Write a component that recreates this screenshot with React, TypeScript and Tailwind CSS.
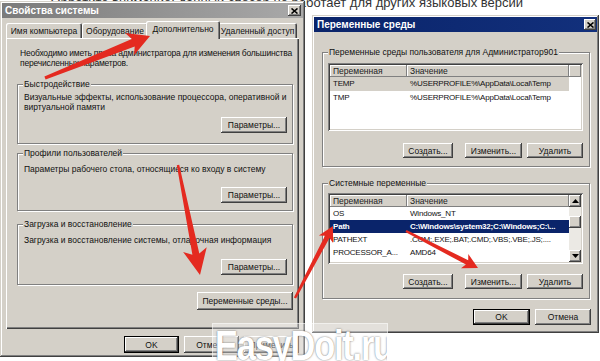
import React from "react";

const RAISED =
  "shadow-[inset_-1px_-1px_0_#404040,inset_1px_1px_0_#d4d0c8,inset_-2px_-2px_0_#808080,inset_2px_2px_0_#ffffff]";
const BTN =
  "shadow-[inset_-1px_-1px_0_#404040,inset_1px_1px_0_#ffffff,inset_-2px_-2px_0_#808080,inset_2px_2px_0_#d4d0c8]";
const SUNKEN =
  "shadow-[inset_1px_1px_0_#808080,inset_-1px_-1px_0_#ffffff,inset_2px_2px_0_#404040,inset_-2px_-2px_0_#d4d0c8]";

function Btn({
  w,
  h = "h-[16px]",
  def = false,
  children,
}: {
  w: string;
  h?: string;
  def?: boolean;
  children: React.ReactNode;
}) {
  if (def) {
    return (
      <div className={`${w} ${h} flex shrink-0 border border-black`}>
        <div className={`flex flex-1 items-center justify-center whitespace-nowrap bg-[#d4d0c8] ${BTN}`}>{children}</div>
      </div>
    );
  }
  return (
    <div className={`${w} ${h} flex shrink-0 items-center justify-center whitespace-nowrap bg-[#d4d0c8] ${BTN}`}>
      {children}
    </div>
  );
}

function CloseBtn({ w }: { w: string }) {
  return (
    <div className={`${w} flex h-[11px] items-center justify-center bg-[#d4d0c8] ${BTN}`}>
      <svg width="7" height="6" viewBox="0 0 7 6">
        <path d="M0.5 0.5 L6.5 5.5 M6.5 0.5 L0.5 5.5" stroke="#000" strokeWidth="1.6" />
      </svg>
    </div>
  );
}

function Group({
  label,
  className,
  children,
}: {
  label: string;
  className: string;
  children: React.ReactNode;
}) {
  return (
    <div
      className={`flex flex-col border border-[#808080] shadow-[inset_1px_1px_0_#ffffff,1px_1px_0_#ffffff] ${className}`}
    >
      <div className="-mt-[6px] ml-[5px] w-fit whitespace-nowrap bg-[#d4d0c8] px-[1px] leading-[10px]">{label}</div>
      {children}
    </div>
  );
}

function Tab({ w, children }: { w: string; children: React.ReactNode }) {
  return (
    <div
      className={`${w} flex h-[15px] shrink-0 items-center justify-center whitespace-nowrap rounded-t-[2px] bg-[#d4d0c8] shadow-[inset_1px_1px_0_#ffffff,inset_-1px_0_0_#404040,inset_-2px_0_0_#808080]`}
    >
      {children}
    </div>
  );
}

function HeaderCell({ className, children }: { className: string; children?: React.ReactNode }) {
  return (
    <div
      className={`flex h-full items-center bg-[#d4d0c8] pl-[3px] text-[#222] shadow-[inset_-1px_-1px_0_#808080,inset_1px_1px_0_#ffffff] ${className}`}
    >
      {children}
    </div>
  );
}

function LeftWindow() {
  return (
    <div className={`mt-[1px] flex h-[356px] w-[305px] shrink-0 flex-col bg-[#d4d0c8] p-[2px] ${RAISED}`}>
      <div className="flex h-[15px] items-center justify-between bg-gradient-to-r from-[#7b7b7b] to-[#a9a9a9] pl-[3px] pr-[2px]">
        <span className="text-[10px] font-bold leading-none text-white">Свойства системы</span>
        <CloseBtn w="w-[13px]" />
      </div>
      <div className="flex flex-col px-[4px] pt-[3px]">
        <div className="flex h-[17px] items-end">
          <Tab w="w-[76px]">Имя компьютера</Tab>
          <Tab w="w-[66px]">Оборудование</Tab>
          <div className="relative z-10 -mx-[2px] -mb-[1px] flex h-[18px] w-[74px] shrink-0 items-start justify-center rounded-t-[2px] bg-[#d4d0c8] pt-[3px] shadow-[inset_1px_1px_0_#ffffff,inset_-1px_0_0_#404040,inset_-2px_0_0_#808080]">
            Дополнительно
          </div>
          <Tab w="w-[79px]">Удаленный доступ</Tab>
        </div>
        <div className="flex h-[291px] flex-col pl-[11px] pr-[6px] pt-[10px] shadow-[inset_1px_1px_0_#ffffff,inset_-1px_-1px_0_#404040,inset_-2px_-2px_0_#808080]">
          <div className="ml-[3px] whitespace-nowrap tracking-[-0.2px]">
            Необходимо иметь права администратора для изменения большинства
            <br />
            перечисленных параметров.
          </div>
          <Group label="Быстродействие" className="mt-[16px] pb-[10px]">
            <div className="mt-[3px] whitespace-nowrap pl-[6px]">
              Визуальные эффекты, использование процессора, оперативной и
              <br />
              виртуальной памяти
            </div>
            <div className="mr-[5px] mt-[5px] self-end">
              <Btn w="w-[66px]">Параметры...</Btn>
            </div>
          </Group>
          <Group label="Профили пользователей" className="mt-[9px] pb-[7px]">
            <div className="mt-[6px] whitespace-nowrap pl-[6px]">
              Параметры рабочего стола, относящиеся ко входу в систему
            </div>
            <div className="mr-[5px] mt-[13px] self-end">
              <Btn w="w-[66px]">Параметры...</Btn>
            </div>
          </Group>
          <Group label="Загрузка и восстановление" className="mt-[13px] pb-[9px]">
            <div className="mt-[6px] whitespace-nowrap pl-[6px]">
              Загрузка и восстановление системы, отладочная информация
            </div>
            <div className="mr-[5px] mt-[14px] self-end">
              <Btn w="w-[66px]">Параметры...</Btn>
            </div>
          </Group>
          <div className="mt-[7px] self-end">
            <Btn w="w-[96px]" h="h-[18px]">
              Переменные среды...
            </Btn>
          </div>
        </div>
        <div className="mt-[7px] flex justify-end gap-[5px]">
          <Btn w="w-[55px]" h="h-[17px]" def>
            OK
          </Btn>
          <Btn w="w-[55px]" h="h-[17px]">
            Отмена
          </Btn>
          <Btn w="w-[55px]" h="h-[17px]">
            Применить
          </Btn>
        </div>
      </div>
    </div>
  );
}

function ScrollArrow({ up }: { up: boolean }) {
  return (
    <div className={`flex h-[12px] items-center justify-center bg-[#d4d0c8] ${BTN}`}>
      <svg width="7" height="4" viewBox="0 0 7 4">
        <path d={up ? "M0 4 L3.5 0 L7 4 Z" : "M0 0 L3.5 4 L7 0 Z"} fill="#000" />
      </svg>
    </div>
  );
}

function ActionButtons({ mt }: { mt: string }) {
  return (
    <div className={`${mt} mr-[6px] flex justify-end`}>
      <Btn w="w-[50px]" h="h-[15px]">
        Создать...
      </Btn>
      <div className="ml-[12px]">
        <Btn w="w-[57px]" h="h-[15px]">
          Изменить...
        </Btn>
      </div>
      <div className="ml-[5px]">
        <Btn w="w-[56px]" h="h-[15px]">
          Удалить
        </Btn>
      </div>
    </div>
  );
}

function RightWindow() {
  const sysRows: [string, string, boolean][] = [
    ["OS", "Windows_NT", false],
    ["Path", "C:\\Windows\\system32;C:\\Windows;C:\\...", true],
    ["PATHEXT", ".COM;.EXE;.BAT;.CMD;.VBS;.VBE;.JS;....", false],
    ["PROCESSOR_A...", "AMD64", false],
  ];
  return (
    <div className={`ml-[7px] mt-[15px] flex h-[318px] w-[287px] shrink-0 flex-col bg-[#d4d0c8] p-[2px] ${RAISED}`}>
      <div className="flex h-[15px] items-center justify-between bg-gradient-to-r from-[#0a246a] to-[#12307c] pl-[3px] pr-[1px]">
        <span className="text-[10px] font-bold leading-none text-white">Переменные среды</span>
        <CloseBtn w="w-[12px]" />
      </div>
      <div className="flex flex-col pl-[8px] pr-[7px]">
        <Group label="Переменные среды пользователя для Администратор901" className="mt-[20px] pb-[8px]">
          <div className={`ml-[5px] mr-[6px] mt-[6px] h-[68px] bg-white p-[2px] ${SUNKEN}`}>
            <div className="flex h-[12px]">
              <HeaderCell className="w-[77px]">Переменная</HeaderCell>
              <HeaderCell className="w-[162px]">Значение</HeaderCell>
              <HeaderCell className="flex-1" />
            </div>
            <div className="flex h-[14px] w-[239px] items-center bg-[#d4d0c8] text-[8px] tracking-[-0.2px]">
              <span className="w-[77px] pl-[3px]">TEMP</span>
              <span className="pl-[3px]">%USERPROFILE%\AppData\Local\Temp</span>
            </div>
            <div className="flex h-[14px] w-[239px] items-center text-[8px] tracking-[-0.2px]">
              <span className="w-[77px] pl-[3px]">TMP</span>
              <span className="pl-[3px]">%USERPROFILE%\AppData\Local\Temp</span>
            </div>
          </div>
          <ActionButtons mt="mt-[12px]" />
        </Group>
        <Group label="Системные переменные" className="mt-[16px] pb-[9px]">
          <div className={`ml-[5px] mr-[6px] mt-[5px] flex h-[71px] bg-white p-[2px] ${SUNKEN}`}>
            <div className="flex flex-1 flex-col overflow-hidden">
              <div className="flex h-[12px] shrink-0">
                <HeaderCell className="w-[77px]">Переменная</HeaderCell>
                <HeaderCell className="w-[162px]">Значение</HeaderCell>
              </div>
              {sysRows.map(([n, v, sel]) => (
                <div
                  key={n}
                  className={
                    sel
                      ? "flex h-[13px] w-[239px] shrink-0 items-center bg-[#0a246a] text-[8px] font-bold tracking-[-0.2px] text-white"
                      : "flex h-[13px] w-[239px] shrink-0 items-center text-[8px] tracking-[-0.2px]"
                  }
                >
                  <span className="w-[77px] pl-[3px]">{n}</span>
                  <span className="whitespace-nowrap pl-[3px]">{v}</span>
                </div>
              ))}
            </div>
            <div className="flex w-[12px] flex-col">
              <ScrollArrow up />
              <div className="flex flex-1 flex-col bg-[#ebe9e4]">
                <div className={`mt-[9px] h-[12px] bg-[#d4d0c8] ${BTN}`} />
              </div>
              <ScrollArrow up={false} />
            </div>
          </div>
          <ActionButtons mt="mt-[10px]" />
        </Group>
        <div className="mr-[-1px] mt-[10px] flex justify-end gap-[5px]">
          <Btn w="w-[57px]" def>
            OK
          </Btn>
          <Btn w="w-[56px]">Отмена</Btn>
        </div>
      </div>
    </div>
  );
}

function arrowPoints(
  x1: number,
  y1: number,
  x2: number,
  y2: number,
  w1: number,
  w2: number,
  hw: number,
  hl: number
) {
  const dx = x2 - x1;
  const dy = y2 - y1;
  const L = Math.hypot(dx, dy);
  const ux = dx / L;
  const uy = dy / L;
  const nx = -uy;
  const ny = ux;
  const bx = x2 - ux * hl;
  const by = y2 - uy * hl;
  const ix = x2 - ux * hl * 0.82;
  const iy = y2 - uy * hl * 0.82;
  const pts = [
    [x1 + (nx * w1) / 2, y1 + (ny * w1) / 2],
    [ix + (nx * w2) / 2, iy + (ny * w2) / 2],
    [bx + (nx * hw) / 2, by + (ny * hw) / 2],
    [x2, y2],
    [bx - (nx * hw) / 2, by - (ny * hw) / 2],
    [ix - (nx * w2) / 2, iy - (ny * w2) / 2],
    [x1 - (nx * w1) / 2, y1 - (ny * w1) / 2],
  ];
  return pts.map((p) => p.map((v) => v.toFixed(1)).join(",")).join(" ");
}

function Arrows() {
  return (
    <svg className="pointer-events-none absolute left-0 top-0 z-20" width="600" height="361" viewBox="0 0 600 361">
      <polygon points={arrowPoints(45, 78, 150, 36, 3, 8, 24, 22)} fill="#e42a20" />
      <polygon points={arrowPoints(178, 165, 200, 275, 2.5, 7, 24, 26)} fill="#e42a20" />
      <polygon points={arrowPoints(295, 298, 333, 226, 2.5, 5, 16, 15)} fill="#e42a20" />
      <polygon points={arrowPoints(406, 231, 478, 268, 2.5, 5, 16, 15)} fill="#e42a20" />
    </svg>
  );
}

function Watermark() {
  return (
    <div className="absolute left-[212px] top-[323px] z-30 flex h-[40px] w-[176px] items-start overflow-hidden border border-white/50 bg-white/35 pl-[2px]">
      <span className="mt-[1px] origin-left scale-x-[0.82] whitespace-nowrap text-[42px] font-bold leading-[42px] tracking-[-1.5px] text-white [text-shadow:0_0_2px_rgba(60,60,60,0.8)]">
        EasyDoit.ru
      </span>
    </div>
  );
}

export default function App() {
  return (
    <div className="relative h-[361px] w-[600px] overflow-hidden bg-white font-['Liberation_Sans',Arial,sans-serif] text-[8.5px] leading-[10px] text-[#111]">
      <div className="absolute right-[77px] top-[-4px] whitespace-nowrap text-[13px] leading-[14px] text-[#333]">
        Обратите внимание: данный способ не работает для других языковых версий
      </div>
      <div className="relative z-10 flex items-start">
        <LeftWindow />
        <RightWindow />
      </div>
      <Watermark />
      <Arrows />
    </div>
  );
}
